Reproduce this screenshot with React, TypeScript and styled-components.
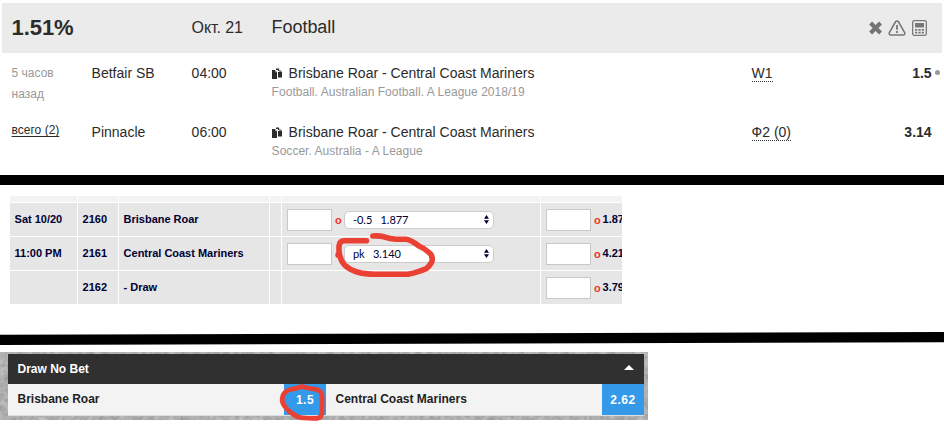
import React from "react";
import styled, { createGlobalStyle, css } from "styled-components";

const GlobalStyle = createGlobalStyle`
  * { box-sizing: border-box; }
  body { margin: 0; background: #fff; }
`;

const Page = styled.main`
  position: relative;
  display: flex;
  flex-direction: column;
  width: 944px;
  height: 424px;
  overflow: hidden;
  font-family: "Liberation Sans", Arial, sans-serif;
`;

/* ---------- surebet card ---------- */

const Surebet = styled.section`
  height: 175px;
  padding: 3px 2px 0;
  color: #2b2b2b;
`;

const surebetGrid = css`
  display: grid;
  grid-template-columns: 80px 100px 80px 480px 1fr;
  padding-left: 9.6px;
`;

const SurebetHeader = styled.header`
  ${surebetGrid}
  align-items: center;
  height: 50px;
  padding-right: 15px;
  background: #ebebeb;
`;

const Percent = styled.strong`
  grid-column: span 2;
  font-size: 22px;
  line-height: 50px;
  letter-spacing: -0.1px;
`;

const EventDate = styled.span`
  font-size: 16px;
  letter-spacing: -0.1px;
`;

const Sport = styled.span`
  font-size: 18px;
  line-height: 48px;
  align-self: start;
  letter-spacing: -0.05px;
`;

const Actions = styled.div`
  display: flex;
  justify-content: flex-end;
  align-items: center;
  gap: 6px;
`;

const BetRow = styled.div`
  ${surebetGrid}
  height: 59px;
  padding-top: 10px;
  padding-right: 10.4px;
  font-size: 14px;
  line-height: 20px;
`;

const Age = styled.div`
  width: 60px;
  color: #999;
  font-size: 12px;
  line-height: 21px;
`;

const TotalLink = styled.a`
  justify-self: start;
  height: 17px;
  font-size: 12px;
  line-height: 16px;
  text-decoration: underline;
  text-underline-offset: 2px;
`;

const MatchName = styled.div`
  display: flex;
  align-items: center;
  gap: 7px;
  white-space: nowrap;
`;

const League = styled.div`
  color: #999;
  font-size: 12px;
  line-height: 19px;
  letter-spacing: 0.035px;
  white-space: nowrap;
`;

const Market = styled.span`
  border-bottom: 1px dotted #333;
  display: inline-block;
  height: 19px;
`;

const Odds = styled.div`
  display: flex;
  justify-content: space-between;
  font-weight: bold;
`;

const OddsValue = styled.span`
  position: relative;
`;

const LiveDot = styled.i`
  position: absolute;
  right: -8px;
  top: 7px;
  width: 5px;
  height: 5px;
  border-radius: 50%;
  background: #999;
`;

const Plain = styled.span`
  font-weight: normal;
`;

/* ---------- dividers ---------- */

const Divider = styled.div`
  height: 10px;
  background: #000;
`;

const SlantedDivider = styled.svg`
  display: block;
  width: 944px;
  height: 16px;
`;

/* ---------- odds table ---------- */

const LinesTable = styled.div`
  display: grid;
  grid-template-columns: 67px 40px 150px 11px 258px 81px;
  grid-template-rows: 6px 33px 33px 33px;
  gap: 1px;
  width: 612px;
  height: 108px;
  margin: 11px 0 26px 10px;
  overflow: hidden;
  color: #000033;
  font-size: 11px;
  font-weight: bold;
`;

const Cell = styled.div<{ $head?: boolean }>`
  display: flex;
  align-items: center;
  min-width: 0;
  padding-left: 5px;
  overflow: hidden;
  white-space: nowrap;
  background: ${(p) => (p.$head ? "#f3f3f3" : "#e6e6e6")};
`;

const Label = styled.span`
  margin-left: -0.4px;
  padding-bottom: 2px;
  letter-spacing: -0.02px;
`;

const StakeInput = styled.input`
  flex: none;
  width: 45px;
  height: 22px;
  border: 1px solid #c8c8c8;
  border-radius: 0;
  background: #fff;
`;

const OddsMark = styled.span`
  flex: none;
  width: 12px;
  padding-left: 3px;
  color: #f03428;
`;

const LineSelect = styled.div`
  display: flex;
  align-items: center;
  justify-content: space-between;
  width: 150px;
  height: 18px;
  padding: 0 4px 0 8px;
  border: 1px solid #ccc;
  border-radius: 5px;
  background: #fff;
  font-family: Lato, sans-serif;
  font-size: 11px;
  font-weight: normal;
  letter-spacing: -0.05px;
  white-space: pre;
`;

/* ---------- draw no bet ---------- */

const MarketPanel = styled.section`
  position: relative;
  width: 648px;
  height: 68px;
  margin-top: 6px;
  padding: 2px 4px 0 8px;
  background: #b0b0b0;
`;

const Grain = styled.svg`
  position: absolute;
  inset: 0;
  width: 648px;
  height: 68px;
`;

const PanelBody = styled.div`
  position: relative;
  font-size: 12px;
  font-weight: bold;
`;

const PanelTitle = styled.div`
  display: flex;
  align-items: center;
  justify-content: space-between;
  height: 30px;
  padding: 0 10px 0 9.5px;
  background: #303030;
  color: #fff;
`;

const CollapseIcon = styled.svg`
  margin-bottom: 4px;
`;

const Runners = styled.div`
  display: grid;
  grid-template-columns: 1fr 1fr;
  height: 32px;
  border-bottom: 1px solid #dedede;
  background: #f3f3f3;
`;

const Runner = styled.div`
  display: flex;
  justify-content: space-between;
  padding-left: 9.5px;
  color: #222;
  line-height: 30px;
`;

const PriceButton = styled.button`
  width: 42px;
  height: 31px;
  padding: 0;
  border: 0;
  background: #3399e8;
  color: #fff;
  font: bold 12px "Liberation Sans", Arial, sans-serif;
  letter-spacing: 0.5px;
`;

const Markup = styled.svg`
  position: absolute;
  inset: 0;
  width: 944px;
  height: 424px;
  pointer-events: none;
`;

const CopyIcon = () => (
  <svg width="10" height="11" viewBox="0 0 10 11">
    <path d="M0 2h3v2h2v7H0zM4 .5h3V3h-1V2H4zM6 4h1.5V1.5L10 4v5.5H6z" fill="#2b2b2b" />
    <path d="M3 2v2.3h2.3zM7.6 2v2H10z" fill="#888" />
  </svg>
);

const CloseIcon = () => (
  <svg width="13" height="14" viewBox="1 0 13 14">
    <path d="M2.600 2l10 10M12.600 2l-10 10" stroke="#747474" strokeWidth="4.2" />
  </svg>
);

const WarningIcon = () => (
  <svg width="18" height="16" viewBox="0 0 18 16">
    <path
      d="M7.5 1.8Q9 .2 10.5 1.8L16.7 12.7Q17.2 14.8 15.2 15H2.8Q.8 14.8 1.3 12.7Z"
      fill="none"
      stroke="#777"
      strokeWidth="1.6"
    />
    <path d="M9 5v4.8M9 11v2" stroke="#777" strokeWidth="1.8" />
  </svg>
);

const CalculatorIcon = () => (
  <svg width="15" height="16" viewBox="0 0 15 16">
    <rect x=".7" y=".7" width="13.6" height="14.6" rx="1.5" fill="#eee" stroke="#777" strokeWidth="1.3" />
    <path d="M3 3h9v4.500H3zM3 9h2.300v1.800H3zM6.400 9h2.300v1.800H6.400zM9.700 9H12v1.800H9.700zM3 11.800h2.300v1.700H3zM6.400 11.800h2.300v1.700H6.400zM9.700 11.800H12v1.700H9.700z" fill="#777" />
  </svg>
);

const Stepper = () => (
  <svg width="5" height="9" viewBox="0 0 5 9">
    <path d="M0 3.7L2.5 0 5 3.7zM0 5.3h5L2.5 9z" fill="#000033" />
  </svg>
);

type Bet = {
  side: React.ReactNode;
  bookmaker: string;
  time: string;
  league: string;
  market: string;
  odds: string;
  live?: boolean;
};

const bets: Bet[] = [
  {
    side: <Age>5 часов назад</Age>,
    bookmaker: "Betfair SB",
    time: "04:00",
    league: "Football. Australian Football. A League 2018/19",
    market: "W1",
    odds: "1.5",
    live: true,
  },
  {
    side: <TotalLink>всего (2)</TotalLink>,
    bookmaker: "Pinnacle",
    time: "06:00",
    league: "Soccer. Australia - A League",
    market: "Ф2 (0)",
    odds: "3.14",
  },
];

const lines = [
  { when: "Sat 10/20", id: "2160", name: "Brisbane Roar", spread: "-0.5   1.877", price: "1.87" },
  { when: "11:00 PM", id: "2161", name: "Central Coast Mariners", spread: "pk   3.140", price: "4.21" },
  { when: "", id: "2162", name: "- Draw", spread: "", price: "3.79" },
];

const runners = [
  { name: "Brisbane Roar", price: "1.5" },
  { name: "Central Coast Mariners", price: "2.62" },
];

export default function App() {
  return (
    <Page>
      <GlobalStyle />
      <Surebet>
        <SurebetHeader>
          <Percent>1.51%</Percent>
          <EventDate>Окт. 21</EventDate>
          <Sport>Football</Sport>
          <Actions>
            <CloseIcon />
            <WarningIcon />
            <CalculatorIcon />
          </Actions>
        </SurebetHeader>
        {bets.map((bet) => (
          <BetRow key={bet.bookmaker}>
            {bet.side}
            <div>{bet.bookmaker}</div>
            <div>{bet.time}</div>
            <div>
              <MatchName>
                <CopyIcon />
                Brisbane Roar - Central Coast Mariners
              </MatchName>
              <League>{bet.league}</League>
            </div>
            <Odds>
              <Plain>
                <Market>{bet.market}</Market>
              </Plain>
              <OddsValue>
                {bet.odds}
                {bet.live && <LiveDot />}
              </OddsValue>
            </Odds>
          </BetRow>
        ))}
      </Surebet>

      <Divider />

      <LinesTable>
        {[0, 1, 2, 3, 4, 5].map((i) => (
          <Cell key={i} $head />
        ))}
        {lines.map((line) => (
          <React.Fragment key={line.id}>
            <Cell>
              <Label>{line.when}</Label>
            </Cell>
            <Cell>
              <Label>{line.id}</Label>
            </Cell>
            <Cell>
              <Label>{line.name}</Label>
            </Cell>
            <Cell />
            <Cell>
              {line.spread && (
                <>
                  <StakeInput />
                  <OddsMark>o</OddsMark>
                  <LineSelect>
                    {line.spread}
                    <Stepper />
                  </LineSelect>
                </>
              )}
            </Cell>
            <Cell>
              <StakeInput />
              <OddsMark>o</OddsMark>
              <Label>{line.price}</Label>
            </Cell>
          </React.Fragment>
        ))}
      </LinesTable>

      <SlantedDivider viewBox="0 0 944 16">
        <path d="M0 4.8L944 2V12.2L0 15z" fill="#000" />
      </SlantedDivider>

      <MarketPanel>
        <Grain>
          <filter id="grain" colorInterpolationFilters="sRGB">
            <feTurbulence type="fractalNoise" baseFrequency="0.2" numOctaves="3" />
            <feColorMatrix values="0.25 0 0 0 0.56  0.25 0 0 0 0.56  0.25 0 0 0 0.56  0 0 0 0 1" />
          </filter>
          <rect width="648" height="68" filter="url(#grain)" />
        </Grain>
        <PanelBody>
          <PanelTitle>
            Draw No Bet
            <CollapseIcon width="10" height="5" viewBox="0 0 10 5">
              <path d="M0 5L5 0l5 5z" fill="#fff" />
            </CollapseIcon>
          </PanelTitle>
          <Runners>
            {runners.map((runner) => (
              <Runner key={runner.name}>
                {runner.name}
                <PriceButton>{runner.price}</PriceButton>
              </Runner>
            ))}
          </Runners>
        </PanelBody>
      </MarketPanel>

      <Markup viewBox="0 0 944 424" fill="none" stroke="#eb4034" strokeLinecap="round" strokeLinejoin="round">
        <path
          strokeWidth="5.6"
          d="M366.5 240.7H344Q339.5 240.7 339 246V251Q340 260 344.5 265Q350 270 357 272Q364 274.3 376 274.3H408Q419 272 426.500 268.500Q432.500 263 432.300 259Q432 254.500 429 252.500Q424 248 419 246Q411 240 406 239.300H396Q390 239 384 236.800Q379 235.500 372.800 236"
        />
        <path
          strokeWidth="4.8"
          d="M302 386.500Q297 388.500 291 389.300Q283 391.500 282.300 398Q281.500 403 286 408Q291 414 298 417Q305 418.700 317 418.300Q322 417.500 322 412V396Q321.500 391 316 389.300Q309 388.500 302 386.500"
        />
      </Markup>
    </Page>
  );
}
